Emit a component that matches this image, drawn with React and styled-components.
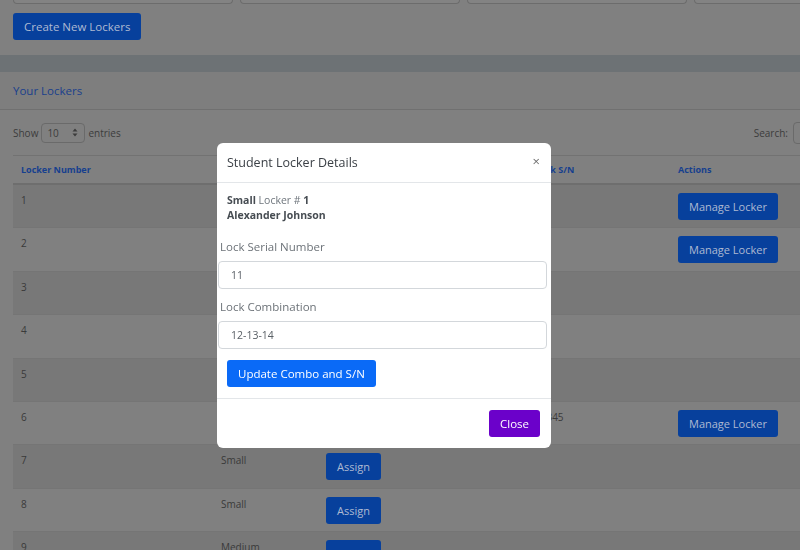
import React from 'react';
import styled, { createGlobalStyle } from 'styled-components';

const GlobalStyle = createGlobalStyle`
  html, body {
    margin: 0;
    padding: 0;
    width: 800px;
    height: 550px;
    overflow: hidden;
    background: #808080;
    font-family: 'Open Sans', 'Liberation Sans', sans-serif;
  }
  * { box-sizing: border-box; }
`;

const Page = styled.div`
  width: 930px;
`;

const FilterRow = styled.div`
  display: grid;
  grid-template-columns: repeat(4, 220px);
  gap: 7px;
  padding: 0 13px;
`;

const FilterStub = styled.div`
  height: 4px;
  border: 1px solid #6c6c6c;
  border-top: none;
  border-radius: 0 0 4px 4px;
  background: #838383;
`;

const Toolbar = styled.div`
  padding: 9px 13px 15px;
`;

const DarkButton = styled.button`
  display: inline-flex;
  align-items: center;
  justify-content: center;
  height: 27px;
  padding: 0 ${p => p.$pad || 11}px;
  border: none;
  border-radius: 3px;
  background: #07409c;
  color: #aebad2;
  font-family: inherit;
  font-size: ${p => p.$size || 11.5}px;
  cursor: pointer;
`;

const Band = styled.div`
  height: 17px;
  background: #6d7275;
`;

const CardHeader = styled.div`
  height: 38px;
  display: flex;
  align-items: center;
  padding: 0 13px;
  background: #7e7e7e;
  border-bottom: 1px solid #707070;
  color: #1a408c;
  font-size: 11.5px;
`;

const CardBody = styled.div`
  padding: 0 13px;
`;

const Controls = styled.div`
  height: 45px;
  display: flex;
  align-items: center;
  justify-content: space-between;
  font-size: 10px;
  color: #3c3c3c;
`;

const ControlGroup = styled.div`
  display: flex;
  align-items: center;
  gap: ${p => p.$gap || 3}px;
`;

const SelectBox = styled.div`
  width: 44px;
  height: 20px;
  border: 1px solid #6a6a6a;
  border-radius: 4px;
  display: flex;
  align-items: center;
  justify-content: space-between;
  padding: 0 6px 0 5px;
  color: #3c3c3c;
`;

const SearchInput = styled.div`
  width: 124px;
  height: 22px;
  border: 1px solid #6a6a6a;
  border-radius: 4px;
`;

const Table = styled.table`
  width: 902px;
  border-collapse: separate;
  border-spacing: 0;
  table-layout: fixed;
  font-size: 10px;
`;

const Th = styled.th`
  height: 30px;
  padding: 0 8px;
  text-align: left;
  color: #163f8e;
  font-size: 9px;
  font-weight: 700;
  border-top: 1px solid #727272;
  border-bottom: 2px solid #6e6e6e;
`;

const Tr = styled.tr`
  background: ${p => (p.$striped ? '#787878' : '#808080')};
`;

const Td = styled.td`
  height: 43.4px;
  padding: 8px 8px 4px;
  vertical-align: top;
  color: #3a3a3a;
  line-height: 14px;
  border-bottom: 1px solid #757575;
`;

const Backdrop = styled.div`
  position: fixed;
  inset: 0;
  padding: 143px 0 0 217px;
`;

const Modal = styled.div`
  width: 334px;
  background: #fff;
  border-radius: 6px;
  overflow: hidden;
`;

const ModalHeader = styled.div`
  height: 40px;
  display: flex;
  align-items: center;
  justify-content: space-between;
  padding: 0 11px 0 10px;
  border-bottom: 1px solid #e3e6e9;
`;

const ModalTitle = styled.div`
  font-size: 12.5px;
  color: #3b4046;
`;

const CloseX = styled.span`
  font-size: 13px;
  color: #6d6d6d;
  line-height: 1;
  margin-top: -2px;
`;

const ModalBody = styled.div`
  padding: 10px 10px 11px;
  border-bottom: 1px solid #e3e6e9;
`;

const Info = styled.div`
  font-size: 10.5px;
  line-height: 15px;
  color: #6f767d;
  & b { color: #464c52; font-weight: 700; }
`;

const Field = styled.div`
  margin: 15px -9px 0 -9px;
  & + & { margin-top: 9px; }
`;

const Label = styled.div`
  font-size: 11.5px;
  line-height: 17px;
  color: #6c7278;
  margin-left: 2px;
  margin-bottom: 6px;
`;

const Input = styled.div`
  height: 28px;
  margin-right: 3px;
  border: 1px solid #d3d7db;
  border-radius: 4px;
  display: flex;
  align-items: center;
  padding: 0 12px;
  font-size: 10.5px;
  color: #595f65;
`;

const BrightButton = styled.button`
  margin-top: 11px;
  height: 27px;
  padding: 0 11px;
  border: none;
  border-radius: 3px;
  background: ${p => p.$bg};
  color: #fff;
  font-family: inherit;
  font-size: 11.5px;
  cursor: pointer;
`;

const ModalFooter = styled.div`
  display: flex;
  justify-content: flex-end;
  padding: 0 11px 11px;
`;

const columns = [
  { label: 'Locker Number', width: 200 },
  { label: 'Size', width: 105 },
  { label: 'Student', width: 104 },
  { label: 'Lock Combo', width: 105 },
  { label: 'Lock S/N', width: 143 },
  { label: 'Actions', width: 245 },
];

const lockers = [
  { num: 1, size: 'Small', student: 'Alexander Johnson', combo: '12-13-14', sn: '11' },
  { num: 2, size: 'Small', student: 'Maria Lopez', combo: '04-22-31', sn: '27' },
  { num: 3, size: 'Small' },
  { num: 4, size: 'Small' },
  { num: 5, size: 'Medium' },
  { num: 6, size: 'Medium', student: 'Ethan Brooks', combo: '08-16-24', sn: '12345' },
  { num: 7, size: 'Small' },
  { num: 8, size: 'Small' },
  { num: 9, size: 'Medium' },
];

const App = () => (
  <>
    <GlobalStyle />
    <Page>
      <FilterRow>
        {[0, 1, 2, 3].map(i => <FilterStub key={i} />)}
      </FilterRow>
      <Toolbar>
        <DarkButton $pad={11}>Create New Lockers</DarkButton>
      </Toolbar>
      <Band />
      <CardHeader>Your Lockers</CardHeader>
      <CardBody>
        <Controls>
          <ControlGroup>
            Show
            <SelectBox>
              10
              <svg width="6" height="9" viewBox="0 0 6 9">
                <path d="M3 0.5 L5.5 3.5 H0.5 Z M3 8.5 L5.5 5.5 H0.5 Z" fill="#3c3c3c" />
              </svg>
            </SelectBox>
            entries
          </ControlGroup>
          <ControlGroup $gap={5}>
            Search:
            <SearchInput />
          </ControlGroup>
        </Controls>
        <Table>
          <colgroup>
            {columns.map(c => <col key={c.label} style={{ width: c.width }} />)}
          </colgroup>
          <thead>
            <tr>
              {columns.map(c => <Th key={c.label}>{c.label}</Th>)}
            </tr>
          </thead>
          <tbody>
            {lockers.map((l, i) => (
              <Tr key={l.num} $striped={i % 2 === 0}>
                <Td>{l.num}</Td>
                <Td>{l.size}</Td>
                <Td>
                  {l.student ? l.student : <DarkButton $size={11}>Assign</DarkButton>}
                </Td>
                <Td>{l.combo}</Td>
                <Td>{l.sn}</Td>
                <Td>
                  {l.student && <DarkButton $size={11}>Manage Locker</DarkButton>}
                </Td>
              </Tr>
            ))}
          </tbody>
        </Table>
      </CardBody>
    </Page>

    <Backdrop>
      <Modal>
        <ModalHeader>
          <ModalTitle>Student Locker Details</ModalTitle>
          <CloseX>×</CloseX>
        </ModalHeader>
        <ModalBody>
          <Info>
            <b>Small</b> Locker # <b>1</b>
            <br />
            <b>Alexander Johnson</b>
          </Info>
          <Field>
            <Label>Lock Serial Number</Label>
            <Input>11</Input>
          </Field>
          <Field>
            <Label>Lock Combination</Label>
            <Input>12-13-14</Input>
          </Field>
          <BrightButton $bg="#0a6af7">Update Combo and S/N</BrightButton>
        </ModalBody>
        <ModalFooter>
          <BrightButton $bg="#6b01ca">Close</BrightButton>
        </ModalFooter>
      </Modal>
    </Backdrop>
  </>
);

export default App;
